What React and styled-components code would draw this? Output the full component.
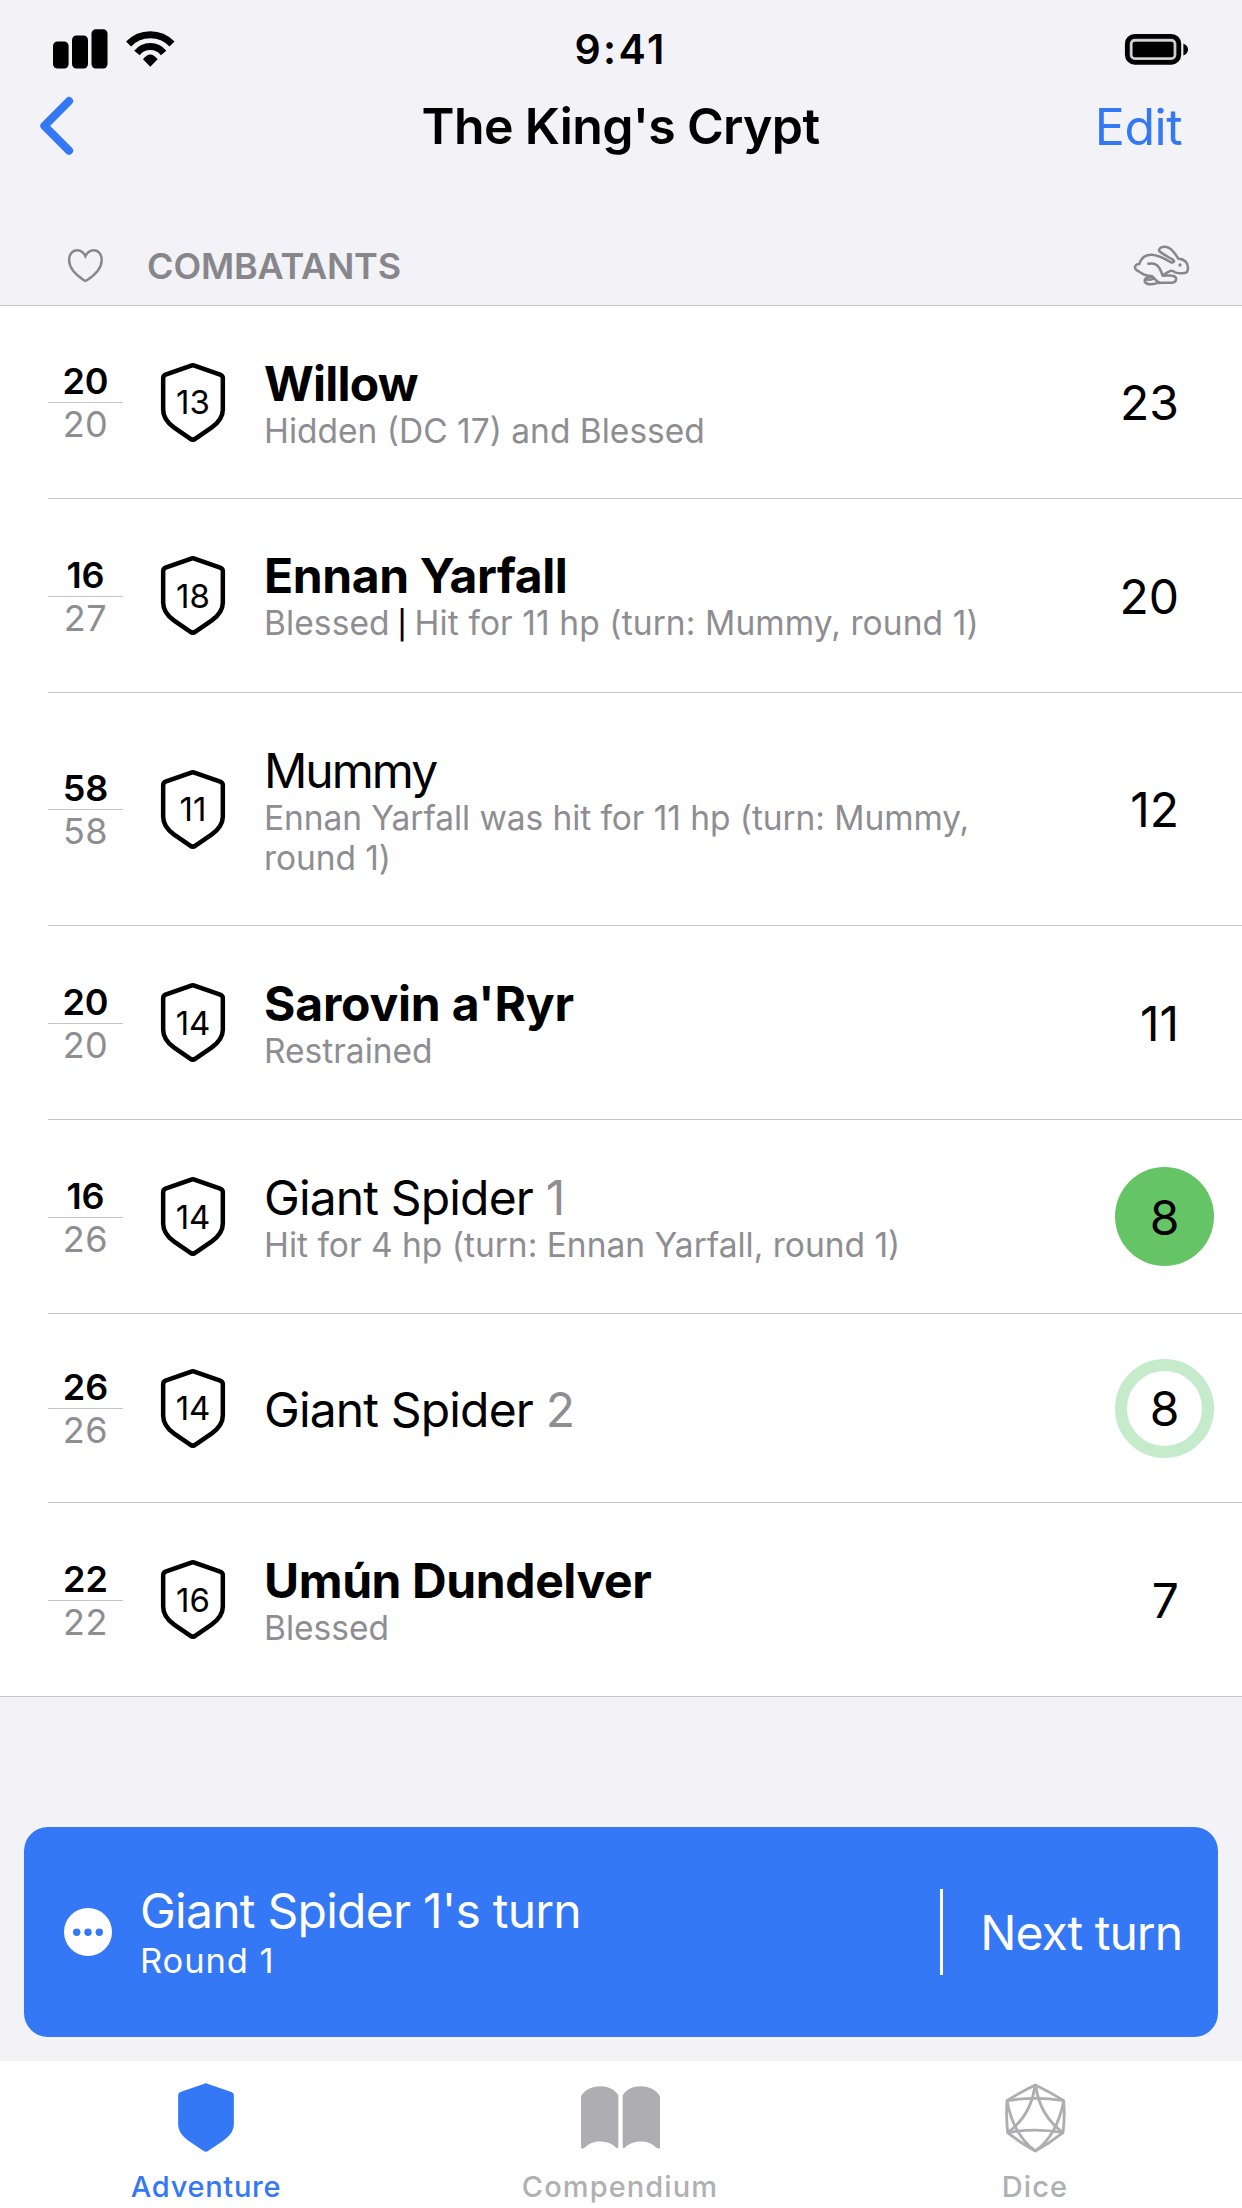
import React from "react";
import styled, { createGlobalStyle, css } from "styled-components";

const blue = "#3478f6";
const muted = "#8e8e92";
const hairline = "#c6c6c9";

const GlobalStyle = createGlobalStyle`
  * { box-sizing: border-box; }
  body { margin: 0; background: #f2f2f7; }
  button { font: inherit; letter-spacing: inherit; color: inherit; background: none; border: 0; padding: 0; }
  ul { list-style: none; margin: 0; padding: 0; }
  svg { display: block; flex: none; overflow: visible; }
`;

const Screen = styled.div`
  display: flex;
  flex-direction: column;
  width: 1242px;
  height: 2208px;
  overflow: hidden;
  background: #f2f2f7;
  color: #000;
  font-family: Inter, "Liberation Sans", sans-serif;
  white-space: nowrap;
`;

const StatusBar = styled.div`
  display: grid;
  grid-template-columns: 1fr auto 1fr;
  align-items: center;
  height: 97px;
  padding: 1px 54px 0 53px;
`;

const Signals = styled.div`
  display: flex;
  align-items: center;
  gap: 18px;
`;

const Clock = styled.div`
  font-size: 41px;
  font-weight: 600;
  letter-spacing: 2.4px;
`;

const BatteryHolder = styled.div`
  justify-self: end;
`;

const NavBar = styled.header`
  display: grid;
  grid-template-columns: 1fr auto 1fr;
  align-items: center;
  height: 58px;
  padding: 0 60px 0 40px;
  margin-bottom: 72px;
`;

const Title = styled.h1`
  margin: 0 0 0 19px;
  font-size: 50px;
  font-weight: 600;
  line-height: 56px;
  letter-spacing: -0.65px;
`;

const EditButton = styled.button`
  && {
    justify-self: end;
    padding-top: 2px;
    font-size: 50px;
    line-height: 54px;
    letter-spacing: -0.5px;
    color: ${blue};
  }
`;

const SectionHeader = styled.div`
  display: flex;
  align-items: center;
  height: 78px;
  padding: 0 53px 1px 68px;
  color: #86868b;
`;

const SectionTitle = styled.h2`
  flex: 1;
  margin: 0 0 0 43px;
  font-size: 36px;
  font-weight: 600;
  letter-spacing: -0.15px;
`;

const List = styled.ul`
  border-top: 1px solid ${hairline};
  border-bottom: 1px solid ${hairline};
  background: #fff;
`;

const Row = styled.li`
  display: flex;
  align-items: center;
  height: ${(p) => p.$height}px;
  margin-left: 48px;
  & + & { border-top: 1px solid ${hairline}; }
`;

const HitPoints = styled.div`
  width: 75px;
  padding-top: 1px;
  text-align: center;
  font-size: 36px;
  line-height: 43px;
`;

const CurrentHp = styled.div`
  padding-top: 1px;
  line-height: 42px;
  font-weight: 570;
  border-bottom: 1px solid ${hairline};
`;

const MaxHp = styled.div`
  color: ${muted};
  letter-spacing: 0.5px;
`;

const ArmorClass = styled.div`
  display: grid;
  place-items: center;
  width: 66px;
  margin: 0 38px 0 37px;
  & > * { grid-area: 1 / 1; }
`;

const ArmorValue = styled.span`
  font-size: 33px;
  line-height: 40px;
`;

const Details = styled.div`
  flex: 1;
  padding-top: 2px;
`;

const Name = styled.div`
  font-size: 48px;
  line-height: 57px;
  font-weight: ${(p) => (p.$player ? 700 : 400)};
  letter-spacing: ${(p) => p.$tracking}px;
`;

const Ordinal = styled.span`
  color: ${muted};
`;

const Note = styled.div`
  width: 720px;
  font-size: 33.5px;
  line-height: 39.5px;
  letter-spacing: ${(p) => p.$tracking || 0}px;
  color: ${muted};
  white-space: normal;
`;

const Divider = styled.span`
  color: #000;
  font-size: 28px;
  font-weight: 500;
`;

const Initiative = styled.div`
  font-size: 48px;
  line-height: 60px;
  margin-right: 63px;
  padding-top: 2px;
  ${(p) =>
    p.$state &&
    css`
      display: flex;
      align-items: center;
      justify-content: center;
      width: 99px;
      height: 99px;
      margin-right: 28px;
      border-radius: 50%;
      background: ${p.$state === "current" ? "#65c466" : "#fff"};
      border: ${p.$state === "next" ? "12px solid #c6ebcb" : "0"};
    `}
`;

const TurnCard = styled.section`
  display: flex;
  align-items: center;
  height: 210px;
  margin: 130px 24px 24px;
  padding: 0 36px 0 40px;
  border-radius: 24px;
  background: ${blue};
  color: #fff;
`;

const TurnText = styled.div`
  flex: 1;
  margin-left: 28px;
`;

const TurnName = styled.div`
  font-size: 48px;
  line-height: 58px;
  letter-spacing: -0.75px;
`;

const RoundLabel = styled.div`
  font-size: 34.5px;
  line-height: 42px;
  letter-spacing: 0.9px;
`;

const NextButton = styled.button`
  && {
    display: flex;
    align-items: center;
    height: 86px;
    padding-left: 37px;
    border-left: 3px solid #fff;
    font-size: 48px;
    letter-spacing: -1px;
  }
`;

const TabBar = styled.nav`
  display: grid;
  grid-template-columns: 412fr 416fr 414fr;
  flex: 1;
  background: #fff;
`;

const Tab = styled.div`
  display: flex;
  flex-direction: column;
  align-items: center;
  gap: 17px;
  padding-top: 22px;
  font-size: 29px;
  font-weight: 500;
  line-height: 36px;
  letter-spacing: ${(p) => p.$tracking}px;
  color: ${(p) => (p.$active ? blue : "#b0b0b3")};
`;

const TabIcon = styled.div`
  display: flex;
  align-items: center;
  height: 69px;
  color: ${(p) => (p.$active ? blue : "#aeaeb2")};
`;

const SHIELD =
  "M122 47 Q129 43 136 47 L211 73 Q219 76 219 84 V178 C219 205 200 221 185 232 L137 265 Q129 271 121 265 L73 232 C58 221 40 205 40 178 V84 Q40 76 47 73 Z";

const CellularIcon = () => (
  <svg width="55" height="40" viewBox="0 0 55 40">
    <rect x="0" y="12.5" width="15.6" height="27" rx="4.5" />
    <rect x="19" y="6.5" width="16" height="33" rx="4.5" />
    <rect x="38.5" y="0.2" width="16" height="39.3" rx="4.5" />
  </svg>
);

const WifiIcon = () => (
  <svg width="48" height="36" viewBox="0 0 48 36">
    <g fill="none" stroke="#000" strokeWidth="7">
      <path d="M2.6 13 A30 30 0 0 1 46 13" />
      <path d="M11 22 A17 17 0 0 1 37.6 22" />
    </g>
    <path d="M24.3 35.8 L17 28.3 Q24.3 18.5 31.6 28.3 Z" />
  </svg>
);

const BatteryIcon = () => (
  <svg width="63" height="31" viewBox="0 0 63 31">
    <rect x="2.3" y="2.3" width="51.5" height="26" rx="7.5" fill="#c4c3c8" stroke="#000" strokeWidth="4.8" />
    <rect x="6.3" y="6.3" width="43.5" height="18" rx="4" fill="none" stroke="#dddce1" strokeWidth="1" />
    <rect x="7.6" y="7.8" width="41" height="15.4" rx="2" />
    <path d="M58.4 9.5 Q63 11.5 63 15.5 Q63 19.5 58.4 21.5 Z" />
  </svg>
);

const BackIcon = () => (
  <svg width="34" height="58" viewBox="0 0 34 58">
    <path d="M29 4.2 L4.4 28.8 L29 53.6" fill="none" stroke={blue} strokeWidth="8.2" strokeLinecap="round" strokeLinejoin="round" />
  </svg>
);

const HeartIcon = () => (
  <svg width="36" height="33" viewBox="0 0 36 33">
    <path
      d="M17.4 7.2 C15.4 3 12.2 1.2 9.3 1.2 C4.5 1.2 1.1 5.2 1.1 11 C1.1 19 8 26 15.9 31.2 Q17.4 32.2 18.9 31.2 C27 26 33.7 19 33.7 11 C33.7 5.2 30.3 1.2 25.6 1.2 C22.6 1.2 19.4 3 17.4 7.2 Z"
      fill="none"
      stroke="currentColor"
      strokeWidth="2.4"
    />
  </svg>
);

const HareIcon = () => (
  <svg width="55" height="40" viewBox="104 76 165 120" fill="none" stroke="currentColor" strokeWidth="7.5" strokeLinecap="round" strokeLinejoin="round">
    <path d="M147 129 C164 126 175 133 180 142 Q185 150 190 165 Q206 153 216 150 Q222 150 227 155 C240 159 257 159 263 154 C268 144 266 130 259 123 C252 115 244 114 237 114 C229 101 216 82 202 79 C190 76 178 81 179 90 C182 96 204 107 221 117 C228 122 222 128 213 124 C190 112 178 101 154 102 C136 103 124 115 120 130 C108 130 104 140 110 147 C115 152 122 152 127 158 C136 165 148 166 157 166 C164 171 171 181 179 187 C192 184 204 188 218 186 C234 185 235 167 219 165 C208 163 199 165 190 165" />
    <path d="M158 168 C142 168 133 175 137 184 C143 194 168 192 179 184" />
    <path d="M143 177 Q154 178 164 173" />
    <circle cx="242" cy="133" r="5" fill="currentColor" stroke="none" />
  </svg>
);

const ShieldOutline = () => (
  <svg width="66" height="81" viewBox="30.5 35 198 243">
    <path d={SHIELD} fill="none" stroke="#000" strokeWidth="13.5" />
  </svg>
);

const ShieldFilled = () => (
  <svg width="56" height="69" viewBox="39.5 44 180 225" preserveAspectRatio="none">
    <path d={SHIELD} fill="currentColor" />
  </svg>
);

const BookIcon = () => (
  <svg width="79" height="63" viewBox="33 46 237 189" fill="currentColor">
    <path d="M33 77 C53 37 125 37 145 74 V229 Q143 235 138 231 C115 207 66 207 46 230 Q33 239 33 229 Z" />
    <path d="M270 77 C250 37 178 37 158 74 V229 Q160 235 165 231 C188 207 237 207 257 230 Q270 239 270 229 Z" />
  </svg>
);

const DiceIcon = () => (
  <svg width="61" height="69" viewBox="43 37 183 207" fill="none" stroke="currentColor" strokeWidth="8.5" strokeLinejoin="round">
    <path d="M134 43 Q90 64 49 90 Q46 140 51 186 Q90 217 134 241 Q178 217 217 186 Q223 140 219 90 Q178 64 134 43 Z" />
    <path d="M49 90 Q134 76 219 90" />
    <path d="M51 186 Q134 171 217 186" />
    <path d="M133 43 C126 100 100 150 51 186" />
    <path d="M135 43 C142 100 168 150 217 186" />
    <path d="M49 90 C60 150 86 206 134 241" />
    <path d="M219 90 C208 150 182 206 134 241" />
  </svg>
);

const MoreIcon = () => (
  <svg width="48" height="48" viewBox="0 0 48 48">
    <circle cx="24" cy="24" r="24" fill="#fff" />
    <g fill={blue}>
      <circle cx="12.7" cy="24.2" r="3.7" />
      <circle cx="24" cy="24.2" r="3.7" />
      <circle cx="35.3" cy="24.2" r="3.7" />
    </g>
  </svg>
);

const combatants = [
  { name: "Willow", player: true, hp: 20, max: 20, ac: 13, initiative: 23, notes: ["Hidden (DC 17) and Blessed"], height: 192, tracking: -0.75 },
  { name: "Ennan Yarfall", player: true, hp: 16, max: 27, ac: 18, initiative: 20, notes: ["Blessed", "Hit for 11 hp (turn: Mummy, round 1)"], height: 194, tracking: -0.4, noteTracking: 0.1 },
  { name: "Mummy", hp: 58, max: 58, ac: 11, initiative: 12, notes: ["Ennan Yarfall was hit for 11 hp (turn: Mummy, round 1)"], height: 233, tracking: -2, noteTracking: -0.07 },
  { name: "Sarovin a'Ryr", player: true, hp: 20, max: 20, ac: 14, initiative: 11, notes: ["Restrained"], height: 194, tracking: -0.2 },
  { name: "Giant Spider", ordinal: 1, hp: 16, max: 26, ac: 14, initiative: 8, state: "current", notes: ["Hit for 4 hp (turn: Ennan Yarfall, round 1)"], height: 194, tracking: -0.85 },
  { name: "Giant Spider", ordinal: 2, hp: 26, max: 26, ac: 14, initiative: 8, state: "next", notes: [], height: 189, tracking: -0.85 },
  { name: "Umún Dundelver", player: true, hp: 22, max: 22, ac: 16, initiative: 7, notes: ["Blessed"], height: 194, tracking: -0.4 },
];

const tabs = [
  { label: "Adventure", Icon: ShieldFilled, active: true, tracking: 0.7 },
  { label: "Compendium", Icon: BookIcon, tracking: 1.1 },
  { label: "Dice", Icon: DiceIcon, tracking: 1.1 },
];

function Combatant({ data }) {
  return (
    <Row $height={data.height}>
      <HitPoints>
        <CurrentHp>{data.hp}</CurrentHp>
        <MaxHp>{data.max}</MaxHp>
      </HitPoints>
      <ArmorClass>
        <ShieldOutline />
        <ArmorValue>{data.ac}</ArmorValue>
      </ArmorClass>
      <Details>
        <Name $player={data.player} $tracking={data.tracking}>
          {data.name}
          {data.ordinal && <Ordinal> {data.ordinal}</Ordinal>}
        </Name>
        {data.notes.length > 0 && (
          <Note $tracking={data.noteTracking}>
            {data.notes.map((note, i) => (
              <React.Fragment key={note}>
                {i > 0 && <Divider> | </Divider>}
                {note}
              </React.Fragment>
            ))}
          </Note>
        )}
      </Details>
      <Initiative $state={data.state}>{data.initiative}</Initiative>
    </Row>
  );
}

export default function App() {
  return (
    <>
      <GlobalStyle />
      <Screen>
        <StatusBar>
          <Signals>
            <CellularIcon />
            <WifiIcon />
          </Signals>
          <Clock>9:41</Clock>
          <BatteryHolder>
            <BatteryIcon />
          </BatteryHolder>
        </StatusBar>
        <NavBar>
          <BackIcon />
          <Title>The King's Crypt</Title>
          <EditButton>Edit</EditButton>
        </NavBar>
        <SectionHeader>
          <HeartIcon />
          <SectionTitle>COMBATANTS</SectionTitle>
          <HareIcon />
        </SectionHeader>
        <List>
          {combatants.map((c) => (
            <Combatant key={c.name + (c.ordinal || "")} data={c} />
          ))}
        </List>
        <TurnCard>
          <MoreIcon />
          <TurnText>
            <TurnName>Giant Spider 1's turn</TurnName>
            <RoundLabel>Round 1</RoundLabel>
          </TurnText>
          <NextButton>Next turn</NextButton>
        </TurnCard>
        <TabBar>
          {tabs.map(({ label, Icon, active, tracking }) => (
            <Tab key={label} $active={active} $tracking={tracking}>
              <TabIcon $active={active}>
                <Icon />
              </TabIcon>
              {label}
            </Tab>
          ))}
        </TabBar>
      </Screen>
    </>
  );
}
